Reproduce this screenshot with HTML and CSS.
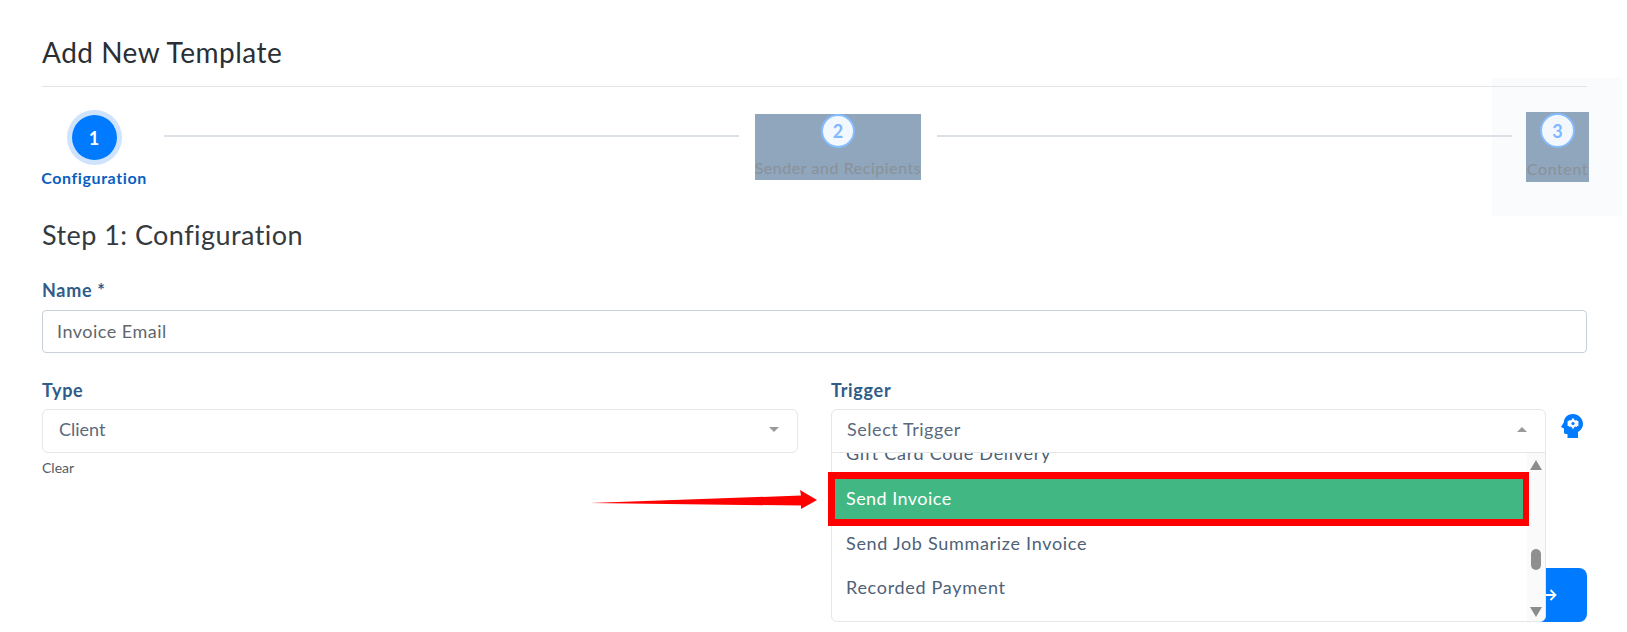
FILE: index.html
```html
<!DOCTYPE html>
<html lang="en">
<head>
<meta charset="utf-8">
<title>Add New Template</title>
<link rel="stylesheet" href="styles.css">
</head>
<body>
<main class="page">
  <div class="ghost-panel"></div>
  <h1 class="title">Add New Template</h1>
  <ol class="stepper">
    <li class="step step-active">
      <span class="dot dot-active">1</span>
      <span class="step-label">Configuration</span>
    </li>
    <li class="connector connector-a"></li>
    <li class="step step-masked step-two">
      <span class="dot dot-idle">2</span>
      <span class="step-label">Sender and Recipients</span>
    </li>
    <li class="connector connector-b"></li>
    <li class="step step-masked step-three">
      <span class="dot dot-idle dot-large">3</span>
      <span class="step-label">Content</span>
    </li>
  </ol>
  <h2 class="subtitle">Step 1: Configuration</h2>
  <div class="field">
    <label class="label">Name *</label>
    <div class="input">Invoice Email</div>
  </div>
  <div class="columns">
    <div class="field col-type">
      <label class="label">Type</label>
      <div class="select select-type">
        <span>Client</span>
        <span class="caret caret-down"></span>
      </div>
      <a class="clear">Clear</a>
    </div>
    <div class="field col-trigger">
      <label class="label">Trigger</label>
      <div class="select select-open">
        <span>Select Trigger</span>
        <span class="caret caret-up"></span>
        <div class="menu">
          <div class="menu-list">
            <div class="option option-clipped">Gift Card Code Delivery</div>
            <div class="option option-selected">Send Invoice</div>
            <div class="option option-first">Send Job Summarize Invoice</div>
            <div class="option">Recorded Payment</div>
          </div>
          <div class="scrollbar">
            <span class="sb-arrow sb-up"></span>
            <span class="sb-thumb"></span>
            <span class="sb-arrow sb-down"></span>
          </div>
        </div>
      </div>
    </div>
    <svg class="head-icon" viewBox="0 0 22 24" aria-hidden="true">
      <path fill="#007bff" d="M12 0C17.500 0 22 4.500 22 10C22 13.500 20 16 17 18V24H6.500V20H4.500C3.500 20 3 19.200 3 18V14.500L0 13L3 8C3 3.500 7 0 12 0Z"/>
      <g stroke="#fff" stroke-width="2.200">
        <path d="M12 4.500V14.500M7.700 7V12M16.300 7V12M7.700 7L16.300 12M16.300 7L7.700 12"/>
      </g>
      <circle fill="#fff" cx="12" cy="9.500" r="3.800"/>
      <circle fill="#007bff" cx="12" cy="9.500" r="1.600"/>
    </svg>
  </div>
  <div class="actions">
    <button class="next" type="button">
      <svg class="next-arrow" viewBox="0 0 12 14" aria-hidden="true">
        <path d="M0 7h10.500M5.500 2l5 5-5 5" fill="none" stroke="#fff" stroke-width="1.800"/>
      </svg>
    </button>
  </div>
  <div class="red-box"></div>
  <svg class="red-arrow" viewBox="0 0 230 20" aria-hidden="true">
    <path fill="#f00" d="M0 13L211 5.500L210 0L227 10L211 19L211 15.600Z"/>
  </svg>
</main>
</body>
</html>
```
FILE: styles.css
```css
* { box-sizing: border-box; }
html, body { margin: 0; height: 632px; overflow: hidden; background: #fff; }
body { font-family: "Lato", "Noto Sans", sans-serif; color: #2f363d; }
.page { position: relative; isolation: isolate; height: 632px; padding: 0 40px 0 42px; }
.ghost-panel { position: absolute; left: 1492px; top: 78px; width: 130px; height: 138px; background: #fafbfd; z-index: -1; }
.title { margin: 0; height: 87px; padding-top: 35px; font-size: 28px; line-height: 34px; font-weight: 400; letter-spacing: .5px; color: #2a2f35; border-bottom: 1px solid #e2e5e8; }
.stepper { display: flex; align-items: flex-start; list-style: none; margin: 0 -2px 0 0; padding: 0; height: 107px; }
.step { display: flex; flex-direction: column; align-items: center; flex: none; }
.step-active { width: 104px; padding-top: 28px; }
.step-masked { background: #8fa6bc; color: #8a9199; font-size: 16px; }
.step-two { width: 166px; height: 66px; margin-top: 27px; }
.step-three { width: 63px; height: 70px; margin-top: 25px; }
.connector { flex: 1; height: 2px; background: #dbe0e6; margin-top: 48px; }
.connector-a { margin-left: 18px; margin-right: 16px; }
.connector-b { margin-left: 16px; margin-right: 14px; }
.dot { display: flex; align-items: center; justify-content: center; border-radius: 50%; font-weight: 700; }
.dot-active { width: 45px; height: 45px; background: #007bff; color: #fff; font-size: 18px; box-shadow: 0 0 0 5px #cfe3fc; }
.dot-idle { width: 34px; height: 34px; background: #f3f8ff; color: #7fb8ff; border: 2px solid #84bcff; font-size: 18px; }
.dot-large { width: 35px; height: 35px; margin-top: 1px; }
.step-label { white-space: nowrap; line-height: 20px; }
.step-active .step-label { margin-top: 8px; font-size: 16px; font-weight: 700; letter-spacing: .6px; color: #0a5fc0; }
.step-two .step-label { margin-top: 10px; letter-spacing: .55px; }
.step-three .step-label { margin-top: 11px; letter-spacing: .6px; }
.subtitle { margin: 25px 0 0; height: 42px; font-size: 27px; line-height: 32px; font-weight: 400; letter-spacing: .45px; color: #343a40; }
.field { display: flex; flex-direction: column; }
.label { font-size: 18px; line-height: 22px; height: 31px; font-weight: 700; color: #2f5c88; letter-spacing: .7px; }
.columns .label { height: 30px; }
.page > .field { margin-top: 18px; }
.input { height: 43px; border: 1px solid #c9d0d8; border-radius: 4px; padding: 0 14px 2px; display: flex; align-items: center; font-size: 18px; letter-spacing: .5px; color: #5f666d; }
.columns { display: flex; margin-top: 26px; }
.col-type { width: 756px; }
.col-trigger { width: 715px; margin-left: 33px; }
.select { position: relative; height: 44px; border: 1px solid #e4e6e9; border-radius: 6px; padding: 0 14px 5px 15px; display: flex; align-items: center; justify-content: space-between; font-size: 18px; letter-spacing: .55px; color: #5a6a7c; background: #fff; }
.select-type { padding-left: 16px; letter-spacing: 0; }
.select-open { border-radius: 6px 6px 0 0; z-index: 2; }
.caret { width: 0; height: 0; border-left: 5px solid transparent; border-right: 5px solid transparent; margin: 2px 4px 0 0; }
.caret-down { border-top: 5px solid #9a9a9a; }
.caret-up { border-bottom: 5px solid #9a9a9a; }
.clear { margin-top: 6px; font-size: 14px; line-height: 18px; color: #555c63; }
.menu { position: absolute; left: -1px; right: -1px; top: 42px; height: 170px; display: flex; overflow: hidden; background: #fff; border: 1px solid #e4e6e9; border-radius: 0 0 6px 6px; }
.menu-list { flex: 1; min-width: 0; }
.option { height: 44px; padding: 0 0 2px 14px; display: flex; align-items: center; font-size: 18px; letter-spacing: .7px; color: #4e6178; }
.option-clipped { height: 26px; align-items: flex-start; line-height: 0; }
.option-selected { height: 40px; margin: 0 4px 0 3px; background: #41b883; color: #fff; padding-left: 11px; letter-spacing: .45px; }
.option-first { margin-top: 3px; }
.scrollbar { width: 18px; background: #fafafa; display: flex; flex-direction: column; align-items: center; padding-top: 7px; }
.sb-arrow { width: 0; height: 0; border-left: 6.5px solid transparent; border-right: 6.5px solid transparent; }
.sb-up { border-bottom: 10px solid #8c8c8c; }
.sb-down { border-top: 10px solid #8c8c8c; margin-top: 37px; }
.sb-thumb { width: 10px; height: 21px; margin-top: 79px; border-radius: 5px; background: #8f8f8f; }
.head-icon { width: 22px; height: 24px; margin: 35px 0 0 15px; flex: none; }
.actions { position: absolute; right: 40px; top: 568px; }
.next { display: flex; align-items: center; justify-content: flex-start; width: 60px; height: 54px; padding: 0 0 0 18px; background: #007bff; border: 0; border-radius: 8px; }
.next-arrow { width: 12px; height: 14px; flex: none; }
.red-box { position: absolute; left: 828px; top: 472px; width: 701px; height: 54px; border-style: solid; border-color: #f00; border-width: 7px 6px 7px 7px; z-index: 3; }
.red-arrow { position: absolute; left: 590px; top: 490px; width: 230px; height: 20px; z-index: 3; }
```
